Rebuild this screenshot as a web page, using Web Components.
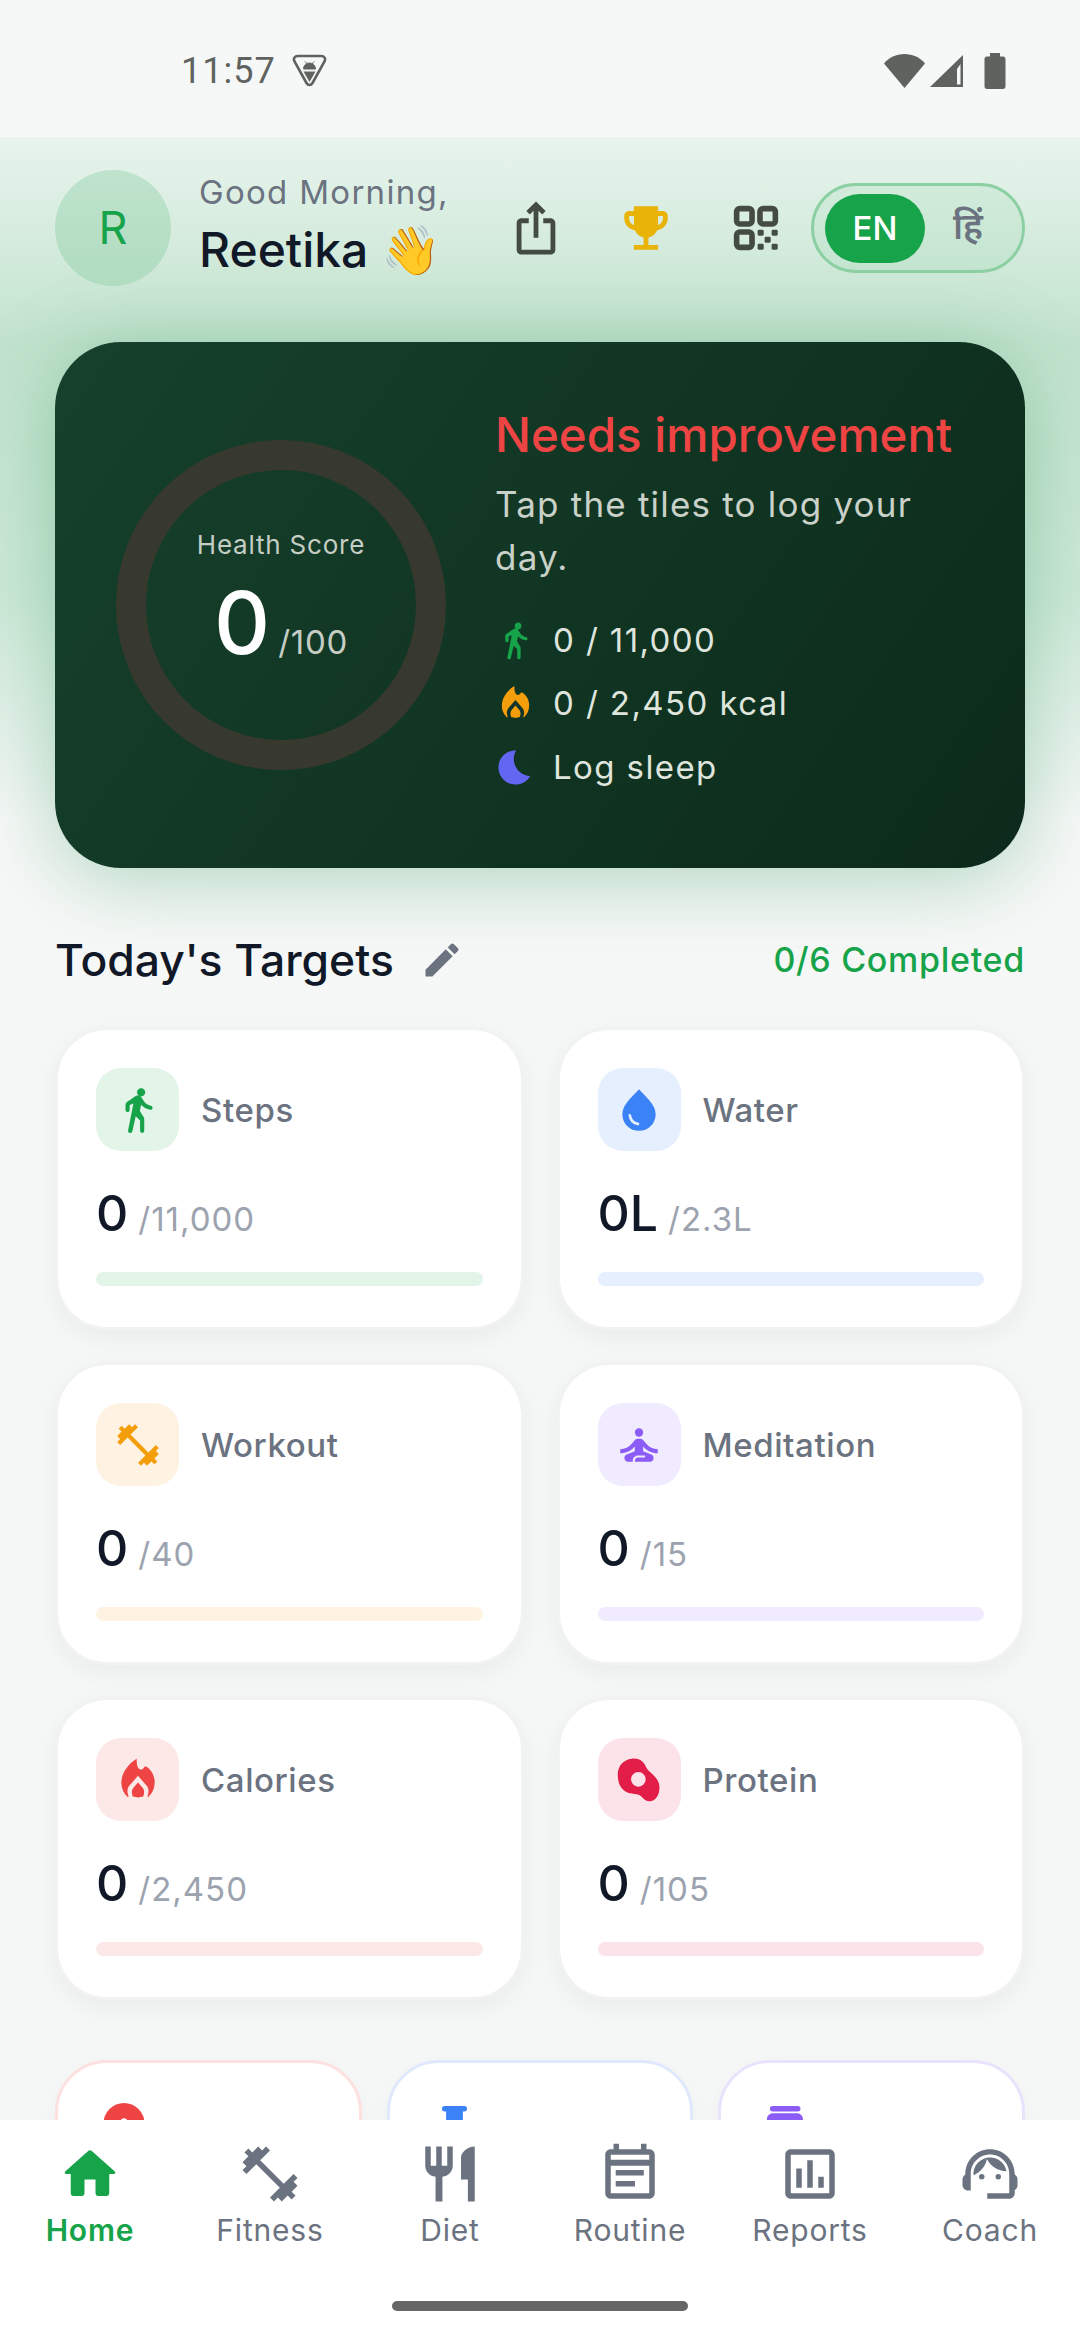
<!DOCTYPE html>
<html>
<head>
<meta charset="utf-8">
<title>Home</title>
<style>
    html, body { margin: 0; padding: 0; }
    body { width: 1080px; height: 2340px; overflow: hidden; background: #f6f8f7; font-family: Inter, "Noto Sans", sans-serif; }
</style>
</head>
<body>
<app-shell>
    <status-bar></status-bar>
    <home-header name="Reetika" greeting="Good Morning,"></home-header>
    <health-card>
        <stat-row icon="walk" style="color:#16a34a">0 / 11,000</stat-row>
        <stat-row icon="flame" style="color:#f59e0b;--cut:#11352a">0 / 2,450 kcal</stat-row>
        <stat-row icon="moon" style="color:#6366f1">Log sleep</stat-row>
    </health-card>
    <section-head title="Today's Targets" status="0/6 Completed"></section-head>
    <target-grid>
        <target-tile label="Steps" value="0" goal="/11,000" icon="walk" color="#16a34a" tint="#e3f4e9"></target-tile>
        <target-tile label="Water" value="0L" goal="/2.3L" icon="drop" color="#3b82f6" tint="#e6effe"></target-tile>
        <target-tile label="Workout" value="0" goal="/40" icon="dumbbell" color="#f59e0b" tint="#fef3e2"></target-tile>
        <target-tile label="Meditation" value="0" goal="/15" icon="meditate" color="#8b5cf6" tint="#f0ebfe"></target-tile>
        <target-tile label="Calories" value="0" goal="/2,450" icon="flame" color="#ef4444" tint="#fde8e8"></target-tile>
        <target-tile label="Protein" value="0" goal="/105" icon="egg" color="#e11d48" tint="#fbe3e9"></target-tile>
    </target-grid>
    <quick-row>
        <quick-tile icon="heart-dot" color="#ef4444" line="#fde0e0"></quick-tile>
        <quick-tile icon="bottle" color="#3b82f6" line="#dfe9fe"></quick-tile>
        <quick-tile icon="jar" color="#8b5cf6" line="#e9e2fd"></quick-tile>
    </quick-row>
    <bottom-nav slot="nav">
        <nav-item icon="home" active>Home</nav-item>
        <nav-item icon="dumbbell">Fitness</nav-item>
        <nav-item icon="diet">Diet</nav-item>
        <nav-item icon="routine">Routine</nav-item>
        <nav-item icon="reports">Reports</nav-item>
        <nav-item icon="coach">Coach</nav-item>
    </bottom-nav>
</app-shell>

<script>
const ICONS = {
    walk: '<path d="M13.5 5.5c1.1 0 2-.9 2-2s-.9-2-2-2-2 .9-2 2 .9 2 2 2zM9.8 8.9 7.24 21.81c-.13.61.35 1.19.98 1.19h.08c.47 0 .87-.32.98-.78L10.9 15l2.1 2v5c0 .55.45 1 1 1s1-.45 1-1v-5.64c0-.55-.22-1.07-.62-1.45L12.9 12.5l.6-3c1.07 1.24 2.62 2.13 4.36 2.41.6.09 1.14-.39 1.14-1 0-.49-.36-.9-.85-.98-1.52-.25-2.78-1.15-3.45-2.33l-1-1.6c-.56-.89-1.68-1.25-2.65-.84L7.22 7.78C6.48 8.1 6 8.82 6 9.63V12c0 .55.45 1 1 1s1-.45 1-1V9.6l1.8-.7z"/>',
    flame: '<path d="M11.4 1.800C11.200 4.800 12 7 13.300 7c1.300 0 1.400-1.200 2.400-1.600C18.500 7 20 10 20 13c0 2.800-1 5.300-3 7H6.900C5 18.200 4 15.800 4 13.300 4 8.600 7.500 4 11.400 1.800z"/><path style="fill:var(--cut,#fff)" d="M12 10l-4.400 5C6.400 17 7 19 8 21h2c-1-2-1.300-3.700-.4-5l2.400-2.800 2.400 2.800c.9 1.300.6 3-.4 5h2c1-2 1.600-4 .4-6z"/><path d="M12 13.600l2 2.800c1 1.600 0 4-2 4s-3-2.400-2-4z"/>',
    moon: '<path d="M12.34 2.020C6.590 1.820 2 6.420 2 12c0 5.520 4.480 10 10 10 3.710 0 6.930-2.020 8.660-5.020-7.510-.25-12.090-8.430-8.320-14.960z"/>',
    drop: '<path d="M12 2c2.500 3 8 7 8 12 0 4.500-3.500 8-8 8s-8-3.500-8-8c0-5 5.500-9 8-12z"/><path style="fill:none;stroke:var(--cut,#fff);stroke-width:1.300;stroke-linecap:round" d="M7.600 14.600c.3 2.300 1.800 3.800 3.900 4.100"/>',
    dumbbell: '<path d="M20.570 14.860L22 13.430 20.570 12 17 15.570 8.430 7 12 3.430 10.570 2 9.140 3.430 7.710 2 5.570 4.140 4.140 2.710 2.710 4.140l1.430 1.430L2 7.710l1.430 1.430L2 10.570 3.430 12 7 8.430 15.570 17 12 20.570 13.430 22l1.430-1.430L16.290 22l2.140-2.140 1.430 1.430 1.430-1.430-1.430-1.430L22 16.290z"/>',
    meditate: '<circle cx="12" cy="6" r="2"/><path d="M21 16v-2c-2.240 0-4.160-.96-5.600-2.680l-1.340-1.600C13.680 9.260 13.120 9 12.530 9h-1.050c-.59 0-1.150.26-1.530.72l-1.340 1.600C7.160 13.040 5.240 14 3 14v2c2.770 0 5.190-1.170 7-3.250V15l-3.880 1.550c-.67.27-1.120.93-1.120 1.660C5 19.200 5.800 20 6.790 20H9v-.5c0-1.380 1.120-2.500 2.500-2.500h3c.28 0 .5.22.5.5s-.22.5-.5.5h-3c-.83 0-1.500.67-1.500 1.500v.5h7.210c.99 0 1.790-.8 1.790-1.790 0-.73-.45-1.390-1.120-1.660L14 15v-2.250c1.810 2.080 4.230 3.250 7 3.250z"/>',
    egg: '<path fill-rule="evenodd" d="M8.500 1.800c4-.5 6 1.700 7 4.200 1 2.300 6 4.500 6.300 9 .2 4-1.800 7.200-4.800 7.200-3 0-3-2.400-5.500-3.200-2-.6-4-.2-6-1.500C3 16 1.800 13 1.800 9.500c0-4.300 2.700-7.200 6.700-7.700zM11.700 8.200c-1.900 0-3.500 1.600-3.500 3.500s1.600 3.500 3.500 3.500 3.500-1.600 3.500-3.500-1.600-3.500-3.500-3.500z"/>',
    home: '<path d="M10 19v-5h4v5c0 .55.45 1 1 1h3c.55 0 1-.45 1-1v-7h1.700c.46 0 .68-.57.33-.87L12.670 3.600c-.38-.34-.96-.34-1.340 0l-8.360 7.530c-.34.3-.13.87.33.87H5v7c0 .55.45 1 1 1h3c.55 0 1-.45 1-1z"/>',
    diet: '<path d="M11 9H9V2H7v7H5V2H3v7c0 2.120 1.660 3.840 3.750 3.970V22h2.500v-9.030C11.340 12.840 13 11.120 13 9V2h-2v7zm5-3v8h2.500v8H21V2c-2.760 0-5 2.240-5 4z"/>',
    routine: '<path fill-rule="evenodd" d="M6 1h2v2h8V1h2v2h1c1.100 0 2 .9 2 2v14c0 1.100-.9 2-2 2H5c-1.100 0-2-.9-2-2V5c0-1.100.9-2 2-2h1zM5 5v1.800h14V5zM5 9v10h14V9z"/><path d="M6.800 10.500H17v2H6.800zM6.800 14.500h7v2h-7z"/>',
    reports: '<path d="M19 3H5c-1.100 0-2 .9-2 2v14c0 1.100.9 2 2 2h14c1.100 0 2-.9 2-2V5c0-1.100-.9-2-2-2zm0 16H5V5h14v14zM7 10h2v7H7zm4-3h2v10h-2zm4 6h2v4h-2z"/>',
    coach: '<path d="M21 12.220C21 6.730 16.740 3 12 3c-4.690 0-9 3.650-9 9.280-.6.34-1 .98-1 1.720v2c0 1.100.9 2 2 2h1v-6.100c0-3.870 3.130-7 7-7s7 3.130 7 7V19h-8v2h8c1.100 0 2-.9 2-2v-1.220c.59-.31 1-.92 1-1.610v-2.300c0-.67-.41-1.280-1-1.650z"/><circle cx="9" cy="13" r="1"/><circle cx="15" cy="13" r="1"/><path d="M18 11.030C17.520 8.180 15.040 6 12.050 6c-3.030 0-6.290 2.510-6.030 6.450 2.470-1.010 4.330-3.210 4.860-5.890 1.310 2.630 4 4.440 7.120 4.470z"/>',
    edit: '<path d="M3 17.250V21h3.750L17.810 9.940l-3.750-3.750L3 17.250zM20.710 7.040c.39-.39.39-1.020 0-1.410l-2.340-2.340c-.39-.39-1.020-.39-1.410 0l-1.830 1.830 3.750 3.750 1.830-1.830z"/>',
    share: '<path d="M16 5l-1.420 1.420-1.590-1.590V16h-1.980V4.830L9.420 6.420 8 5l4-4 4 4zm4 5v11c0 1.100-.9 2-2 2H6c-1.110 0-2-.9-2-2V10c0-1.110.89-2 2-2h3v2H6v11h12V10h-3V8h3c1.100 0 2 .9 2 2z"/>',
    trophy: '<path d="M19 5h-2V3H7v2H5c-1.100 0-2 .9-2 2v1c0 2.550 1.920 4.630 4.390 4.940.63 1.500 1.980 2.630 3.610 2.960V19H7v2h10v-2h-4v-3.100c1.630-.33 2.980-1.460 3.610-2.960C19.080 12.630 21 10.550 21 8V7c0-1.100-.9-2-2-2zM5 8V7h2v3.820C5.840 10.400 5 9.300 5 8zm14 0c0 1.300-.84 2.400-2 2.820V7h2v1z"/>',
    qr: '<g fill="none" stroke="currentColor" stroke-width="2.400"><rect x="3.700" y="3.700" width="6.600" height="6.600" rx="1.300"/><rect x="13.700" y="3.700" width="6.600" height="6.600" rx="1.300"/><rect x="3.700" y="13.700" width="6.600" height="6.600" rx="1.300"/></g><rect x="12.700" y="12.700" width="2.600" height="2.600" rx=".6"/><rect x="18.700" y="12.700" width="2.600" height="2.600" rx=".6"/><rect x="15.700" y="15.700" width="2.600" height="2.600" rx=".6"/><rect x="12.700" y="18.700" width="2.600" height="2.600" rx=".6"/><rect x="18.700" y="18.700" width="2.600" height="2.600" rx=".6"/>',
    'heart-dot': '<circle cx="12" cy="9.250" r="7.450"/><circle cx="12" cy="8.700" r="1.300" fill="#fff"/>',
    bottle: '<rect x="6.900" y="2.900" width="9.100" height="2" rx="1"/><path d="M8.400 4.500h6.100V22H8.400z"/>',
    jar: '<rect x="5.800" y="2.900" width="11.100" height="2" rx="1"/><path d="M4.700 7.700c0-1.300 1-2.200 2.200-2.200h8.700c1.200 0 2.200.9 2.200 2.200V22H4.700z"/>'
};

class AppIcon extends HTMLElement {
    connectedCallback() {
        const root = this.shadowRoot || this.attachShadow({ mode: 'open' });
        const size = this.getAttribute('size') || 66;
        root.innerHTML = `
            <style>
                :host { display: block; width: ${size}px; height: ${size}px; flex: none; }
                svg { display: block; width: 100%; height: 100%; fill: currentColor; }
            </style>
            <svg viewBox="0 0 24 24">${ICONS[this.getAttribute('name')] || ''}</svg>
        `;
    }
}
customElements.define('app-icon', AppIcon);

class AppShell extends HTMLElement {
    constructor() {
        super();
        this.attachShadow({ mode: 'open' });
        this.shadowRoot.innerHTML = `
            <style>
                :host { display: flex; flex-direction: column; width: 1080px; height: 2340px; overflow: hidden; }
                .top { flex: none; }
                .scroll {
                    flex: 1; min-height: 0; overflow: hidden; box-sizing: border-box; padding: 33px 55px 0;
                    background: linear-gradient(180deg, #e8f4ed 0, #c2e3ce 205px, #cde9d8 460px, #f6f8f7 680px);
                }
            </style>
            <div class="top"><slot name="status"></slot></div>
            <div class="scroll"><slot></slot></div>
            <slot name="nav"></slot>
        `;
    }
    connectedCallback() {
        const bar = this.querySelector('status-bar');
        if (bar) bar.slot = 'status';
    }
}
customElements.define('app-shell', AppShell);

class StatusBar extends HTMLElement {
    constructor() {
        super();
        this.attachShadow({ mode: 'open' });
        this.shadowRoot.innerHTML = `
            <style>
                :host { display: flex; align-items: center; height: 137px; box-sizing: border-box; padding: 4px 74px 0 181px; background: #f6f8f7; color: #5f6360; }
                .time { font: 400 36px/1 Roboto, sans-serif; letter-spacing: 1px; margin-right: 16px; }
                .right { margin-left: auto; display: flex; align-items: center; gap: 3px; }
                svg { display: block; }
            </style>
            <span class="time">11:57</span>
            <svg width="35" height="33" viewBox="0 0 35 33">
                <path d="M6 2h23c3.500 0 5 2.500 3.500 5.500L20.500 29c-1.500 2.600-4.500 2.600-6 0L2.500 7.500C1 4.500 2.500 2 6 2z" fill="none" stroke="currentColor" stroke-width="2.600"/>
                <path d="M11.500 15a6 6 0 0 1 12 0zM13 7.500l2 2.500M22 7.500l-2 2.500" fill="currentColor" stroke="currentColor" stroke-width="1"/>
                <path d="M11.500 17.500h12L17.500 28z" fill="currentColor"/>
            </svg>
            <div class="right">
                <svg width="43" height="35" viewBox="0 0 43 35"><path d="M21.500 1C13 1 6 4.500 1 10.500L21.500 35 42 10.500C37 4.500 30 1 21.500 1z" fill="currentColor"/></svg>
                <svg width="35" height="33" viewBox="0 0 35 33"><path fill-rule="evenodd" d="M34 1v32H1zM31.500 10l-3.500 5v15.500h3.500z" fill="currentColor"/></svg>
                <svg width="22" height="36" viewBox="0 0 22 36" style="margin-left:17px"><path d="M6 0h10v3.500h3c1.500 0 2.500 1 2.500 2.500v27.500c0 1.500-1 2.500-2.500 2.500H3c-1.500 0-2.500-1-2.500-2.500V6C.5 4.500 1.500 3.500 3 3.500h3z" fill="currentColor"/></svg>
            </div>
        `;
    }
}
customElements.define('status-bar', StatusBar);

class LangToggle extends HTMLElement {
    constructor() {
        super();
        this.attachShadow({ mode: 'open' });
        this.shadowRoot.innerHTML = `
            <style>
                :host { display: flex; align-items: center; flex: none; box-sizing: border-box; width: 214px; height: 90px; padding: 0 11px; border: 3px solid #8ccfa3; border-radius: 45px; background: rgba(22,163,74,0.06); }
                .on { width: 100px; height: 69px; border-radius: 35px; background: #16a34a; color: #fff; font: 500 33px/69px Inter, sans-serif; text-align: center; }
                .off { flex: 1; height: 69px; color: #6b7280; font: 600 36px/64px "Noto Sans", "Noto Sans Devanagari", "Lohit Devanagari", sans-serif; text-align: center; }
            </style>
            <div class="on">EN</div>
            <div class="off">हिं</div>
        `;
    }
}
customElements.define('lang-toggle', LangToggle);

class HomeHeader extends HTMLElement {
    connectedCallback() {
        const root = this.shadowRoot || this.attachShadow({ mode: 'open' });
        root.innerHTML = `
            <style>
                :host { display: flex; align-items: center; height: 116px; }
                .avatar { width: 116px; height: 116px; flex: none; border-radius: 50%; background: linear-gradient(180deg, #bfe3cd, #b0dcc0); color: #16a34a; font: 400 45px/116px Inter, sans-serif; text-align: center; }
                .who { margin-left: 28px; flex: 1; min-width: 0; padding-bottom: 4px; }
                .hi { font: 400 33px/48px Inter, sans-serif; color: #6b7280; letter-spacing: 1.3px; white-space: nowrap; }
                .name { font: 500 48px/68px Inter, "Noto Color Emoji", sans-serif; color: #111827; white-space: nowrap; }
                .action { width: 110px; display: flex; justify-content: center; flex: none; }
            </style>
            <div class="avatar">R</div>
            <div class="who">
                <div class="hi">${this.getAttribute('greeting')}</div>
                <div class="name">${this.getAttribute('name')} 👋</div>
            </div>
            <div class="action" style="color:#444b44"><app-icon name="share" size="58"></app-icon></div>
            <div class="action" style="color:#eab308"><app-icon name="trophy" size="58"></app-icon></div>
            <div class="action" style="color:#444b44"><app-icon name="qr" size="56"></app-icon></div>
            <lang-toggle></lang-toggle>
        `;
    }
}
customElements.define('home-header', HomeHeader);

class StatRow extends HTMLElement {
    connectedCallback() {
        const root = this.shadowRoot || this.attachShadow({ mode: 'open' });
        root.innerHTML = `
            <style>
                :host { display: flex; align-items: center; height: 63.5px; }
                .text { margin-left: 17px; font: 400 33px/1 Inter, sans-serif; letter-spacing: 1.4px; color: #dfe5dc; white-space: nowrap; }
            </style>
            <app-icon name="${this.getAttribute('icon')}" size="41"></app-icon>
            <span class="text"><slot></slot></span>
        `;
    }
}
customElements.define('stat-row', StatRow);

class HealthCard extends HTMLElement {
    constructor() {
        super();
        this.attachShadow({ mode: 'open' });
        this.shadowRoot.innerHTML = `
            <style>
                :host {
                    display: flex; align-items: center; box-sizing: border-box; height: 526px; margin-top: 56px; padding: 0 61px;
                    border-radius: 66px; background: linear-gradient(125deg, #16412c 0%, #0c2a1b 100%);
                    box-shadow: 0 10px 80px rgba(34,140,80,0.34);
                }
                .ring { width: 330px; height: 330px; flex: none; box-sizing: border-box; border: 30px solid #38392e; border-radius: 50%; display: flex; flex-direction: column; align-items: center; justify-content: center; padding-bottom: 10px; }
                .cap { font: 400 26px/36px Inter, sans-serif; color: #c5cdc4; letter-spacing: 0.8px; }
                .score { display: flex; align-items: baseline; margin-top: 10px; font: 500 87px/100px Inter, sans-serif; color: #fff; }
                .score small { margin-left: 8px; font: 400 33px/1 Inter, sans-serif; color: #c5cdc4; letter-spacing: 0.7px; }
                .info { margin-left: 49px; flex: 1; min-width: 0; padding-bottom: 6px; }
                h2 { margin: 0; font: 500 47.5px/60px Inter, sans-serif; color: #ef4444; white-space: nowrap; }
                p { margin: 13px 0 24px; font: 400 35px/53px Inter, sans-serif; color: #c9d1c8; letter-spacing: 1.2px; }
            </style>
            <div class="ring">
                <div class="cap">Health Score</div>
                <div class="score">0<small>/100</small></div>
            </div>
            <div class="info">
                <h2>Needs improvement</h2>
                <p>Tap the tiles to log your day.</p>
                <slot></slot>
            </div>
        `;
    }
}
customElements.define('health-card', HealthCard);

class SectionHead extends HTMLElement {
    connectedCallback() {
        const root = this.shadowRoot || this.attachShadow({ mode: 'open' });
        root.innerHTML = `
            <style>
                :host { display: flex; align-items: center; height: 54px; margin: 65px 0 40px; }
                h3 { margin: 0; font: 500 44.4px/54px Inter, sans-serif; color: #111827; white-space: nowrap; }
                app-icon { margin-left: 26px; color: #6b7280; }
                .done { margin-left: auto; font: 500 34px/54px Inter, sans-serif; color: #16a34a; letter-spacing: 0.7px; white-space: nowrap; }
            </style>
            <h3>${this.getAttribute('title')}</h3>
            <app-icon name="edit" size="44"></app-icon>
            <span class="done">${this.getAttribute('status')}</span>
        `;
    }
}
customElements.define('section-head', SectionHead);

class TargetGrid extends HTMLElement {
    constructor() {
        super();
        this.attachShadow({ mode: 'open' });
        this.shadowRoot.innerHTML = `
            <style>:host { display: grid; grid-template-columns: 1fr 1fr; gap: 32px 33px; }</style>
            <slot></slot>
        `;
    }
}
customElements.define('target-grid', TargetGrid);

class TargetTile extends HTMLElement {
    connectedCallback() {
        const root = this.shadowRoot || this.attachShadow({ mode: 'open' });
        const color = this.getAttribute('color');
        const tint = this.getAttribute('tint');
        root.innerHTML = `
            <style>
                :host { display: block; box-sizing: border-box; height: 303px; padding: 38px 38px 41px; background: #fff; border: 3px solid #f1f3f2; border-radius: 52px; box-shadow: 0 8px 28px rgba(0,0,0,0.055); background-clip: padding-box; }
                .head { display: flex; align-items: center; gap: 22px; }
                .badge { width: 83px; height: 83px; border-radius: 25px; background: ${tint}; color: ${color}; --cut: ${tint}; display: flex; align-items: center; justify-content: center; flex: none; }
                .label { padding-top: 2px; font: 500 33px/1.2 Inter, sans-serif; color: #6b7280; letter-spacing: 0.6px; }
                .nums { display: flex; align-items: baseline; margin-top: 32px; height: 60px; }
                .value { font: 500 50px/60px Inter, sans-serif; color: #111827; }
                .goal { margin-left: 10px; font: 400 33px/1 Inter, sans-serif; color: #9ca3af; letter-spacing: 1px; }
                .bar { height: 14px; margin-top: 29px; border-radius: 7px; background: ${tint}; }
            </style>
            <div class="head">
                <div class="badge"><app-icon name="${this.getAttribute('icon')}" size="50"></app-icon></div>
                <span class="label">${this.getAttribute('label')}</span>
            </div>
            <div class="nums">
                <span class="value">${this.getAttribute('value')}</span>
                <span class="goal">${this.getAttribute('goal')}</span>
            </div>
            <div class="bar"></div>
        `;
    }
}
customElements.define('target-tile', TargetTile);

class QuickRow extends HTMLElement {
    constructor() {
        super();
        this.attachShadow({ mode: 'open' });
        this.shadowRoot.innerHTML = `
            <style>:host { display: grid; grid-template-columns: repeat(3, 1fr); gap: 25px; margin-top: 60px; }</style>
            <slot></slot>
        `;
    }
}
customElements.define('quick-row', QuickRow);

class QuickTile extends HTMLElement {
    connectedCallback() {
        const root = this.shadowRoot || this.attachShadow({ mode: 'open' });
        root.innerHTML = `
            <style>
                :host { display: block; box-sizing: border-box; height: 240px; padding: 35px 33px; background: #fff; border: 3px solid ${this.getAttribute('line')}; border-radius: 52px; box-shadow: 0 8px 28px rgba(0,0,0,0.04); color: ${this.getAttribute('color')}; }
            </style>
            <app-icon name="${this.getAttribute('icon')}" size="66"></app-icon>
        `;
    }
}
customElements.define('quick-tile', QuickTile);

class NavItem extends HTMLElement {
    connectedCallback() {
        const root = this.shadowRoot || this.attachShadow({ mode: 'open' });
        const active = this.hasAttribute('active');
        root.innerHTML = `
            <style>
                :host { display: flex; flex-direction: column; align-items: center; color: ${active ? '#16a34a' : '#6b7280'}; }
                span { margin-top: 3px; font: ${active ? 600 : 400} 30px/40px Inter, sans-serif; letter-spacing: 0.8px; }
            </style>
            <app-icon name="${this.getAttribute('icon')}" size="66"></app-icon>
            <span><slot></slot></span>
        `;
    }
}
customElements.define('nav-item', NavItem);

class BottomNav extends HTMLElement {
    constructor() {
        super();
        this.attachShadow({ mode: 'open' });
        this.shadowRoot.innerHTML = `
            <style>
                :host { display: block; flex: none; height: 220px; box-sizing: border-box; padding-top: 21px; background: #fff; position: relative; }
                .items { display: grid; grid-template-columns: repeat(6, 1fr); }
                .pill { width: 296px; height: 10px; margin: 51px auto 0; border-radius: 5px; background: #666; }
            </style>
            <div class="items"><slot></slot></div>
            <div class="pill"></div>
        `;
    }
}
customElements.define('bottom-nav', BottomNav);
</script>
</body>
</html>
